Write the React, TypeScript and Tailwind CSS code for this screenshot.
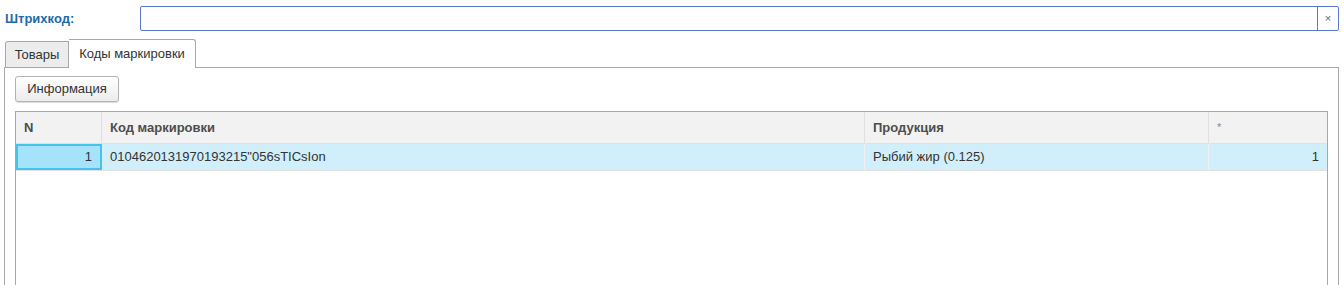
import React from 'react';

const cols = [
  { title: 'N', w: 'w-[86px]' },
  { title: 'Код маркировки', w: 'w-[763px]' },
  { title: 'Продукция', w: 'w-[344px]' },
  { title: '*', w: 'flex-1' },
];

const App: React.FC = () => {
  return (
    <div className="w-[1344px] h-[285px] bg-white overflow-hidden text-[13px] text-[#333] font-['Liberation_Sans',Arial,sans-serif]">
      {/* Barcode row */}
      <div className="flex items-center pt-[6px]">
        <div className="w-[140px] pl-[5px] font-bold text-[#1d6aa9]">Штрихкод:</div>
        <div className="flex w-[1199px] h-[25px] border border-[#5a78d2] rounded-[2px]">
          <div className="flex-1" />
          <div className="w-[21px] border-l border-[#5a78d2] flex items-center justify-center text-[11px] text-[#666]">×</div>
        </div>
      </div>

      {/* Tabs */}
      <div className="flex items-end pl-[5px] mt-[8px] h-[28px]">
        <div className="h-[26px] w-[64px] flex items-center justify-center bg-[#ececec] border border-b-0 border-[#a8a8a8] rounded-tl-[3px] text-[#333]">
          Товары
        </div>
        <div className="relative z-10 -mb-px h-[29px] w-[127px] flex items-center justify-center bg-white border border-b-0 border-l-0 border-[#a8a8a8] rounded-tr-[3px] text-[#333]">
          Коды маркировки
        </div>
      </div>

      {/* Panel */}
      <div className="ml-[4px] w-[1335px] h-[230px] border border-[#a8a8a8] pl-[10px] pt-[8px]">
        <button className="w-[104px] h-[26px] border border-[#b3b3b3] rounded-[3px] bg-gradient-to-b from-white to-[#ececec] shadow-[0_1px_1px_rgba(0,0,0,0.15)] text-[#333]">
          Информация
        </button>

        <div className="mt-[9px] w-[1313px] h-[200px] border border-[#a8a8a8]">
          <div className="flex h-[32px] bg-[#f2f2f2] border-b border-[#e0e0e0]">
            {cols.map((c, i) => (
              <div
                key={c.title}
                className={`${c.w} flex items-center pl-[8px] font-bold text-[#4d4d4d] ${i < cols.length - 1 ? 'border-r border-[#e0e0e0]' : ''} ${c.title === '*' ? 'font-normal text-[#888] text-[11px] items-start pt-[7px]' : ''}`}
              >
                {c.title}
              </div>
            ))}
          </div>
          <div className="flex h-[27px] bg-[#d0effa] border-b border-[#e2e2e2]">
            <div className="w-[86px] flex items-center justify-end pr-[8px] bg-[#a5e3fb] border-2 border-[#45c2ee]">1</div>
            <div className="w-[763px] flex items-center pl-[8px] border-r border-[#f0f0f0]">0104620131970193215"056sTICsIon</div>
            <div className="w-[344px] flex items-center pl-[8px] border-r border-[#f0f0f0]">Рыбий жир (0.125)</div>
            <div className="flex-1 flex items-center justify-end pr-[8px]">1</div>
          </div>
        </div>
      </div>
    </div>
  );
};

export default App;
